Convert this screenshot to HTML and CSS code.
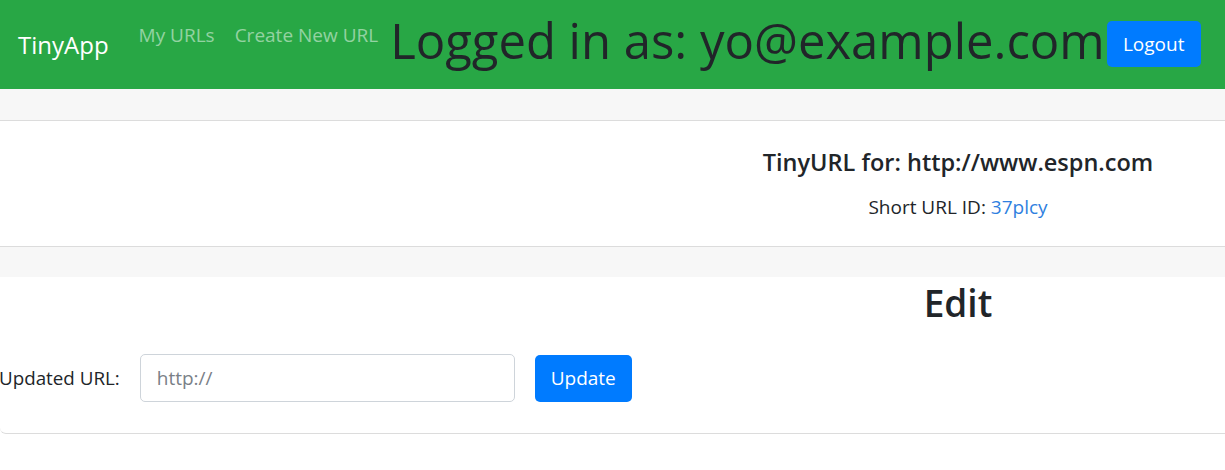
FILE: index.html
```html
<!DOCTYPE html>
<html>
<head>
<meta charset="utf-8">
<link rel="stylesheet" href="styles.css">
<title>TinyApp</title>
</head>
<body>
<nav class="navbar">
  <a class="brand" href="#">TinyApp</a>
  <ul class="nav">
    <li><a class="nav-link" href="#">My URLs</a></li>
    <li><a class="nav-link" href="#">Create New URL</a></li>
  </ul>
  <h1 class="user">Logged in as: yo@example.com</h1>
  <button class="btn logout">Logout</button>
</nav>
<main class="card">
  <div class="card-header"></div>
  <div class="card-body info">
    <h5 class="title">TinyURL for: http://www.espn.com</h5>
    <p class="short">Short URL ID: <a href="#">37plcy</a></p>
  </div>
  <div class="card-header second"></div>
  <div class="card-body edit">
    <h2 class="edit-title">Edit</h2>
    <form class="form">
      <label class="label">Updated URL:</label>
      <input class="input" type="text" placeholder="http://">
      <button class="btn update" type="button">Update</button>
    </form>
  </div>
</main>
</body>
</html>
```
FILE: styles.css
```css
html, body {
  margin: 0;
  padding: 0;
  overflow: hidden;
  background: #fff;
}
body {
  font-family: "Open Sans", "Noto Sans", sans-serif;
  color: #212529;
  font-size: 20px;
  width: 1225px;
}
.navbar {
  background: #28a745;
  height: 89px;
  box-sizing: border-box;
  display: flex;
  align-items: flex-start;
  padding: 0 24px 0 18px;
}
.navbar > * {
  flex-shrink: 0;
  white-space: nowrap;
}
.brand {
  color: #fff;
  text-decoration: none;
  font-size: 24px;
  margin-top: 28px;
  margin-right: 20px;
  line-height: 34px;
}
.nav {
  list-style: none;
  margin: 0;
  padding: 0;
  display: flex;
  margin-top: 20px;
}
.nav-link {
  display: block;
  color: rgba(255, 255, 255, 0.5);
  text-decoration: none;
  font-size: 19px;
  line-height: 30px;
  padding: 0 10px;
  white-space: nowrap;
}
.user {
  margin: 7px 0 0 2px;
  font-size: 49px;
  font-weight: 400;
  line-height: 66px;
  color: #212529;
  white-space: nowrap;
}
.btn {
  font-family: inherit;
  border: none;
  border-radius: 5px;
  background: #007bff;
  color: #fff;
  font-size: 19px;
  cursor: pointer;
}
.logout {
  margin: 21px 0 0 2px;
  width: 94px;
  height: 46px;
}
.card {
  width: 1916px;
  display: flex;
  flex-direction: column;
}
.card-header {
  height: 31px;
  background: #f7f7f7;
  border-bottom: 1px solid #dcdcdc;
}
.card-header.second {
  border-bottom: none;
  height: 30px;
}
.card-body {
  text-align: center;
}
.info {
  height: 126px;
  box-sizing: border-box;
  border-bottom: 1px solid #dcdcdc;
  padding-top: 26px;
}
.title {
  margin: 0;
  font-size: 23.5px;
  font-weight: 600;
  line-height: 30px;
}
.short {
  margin: 16px 0 0;
  font-size: 19px;
  line-height: 28px;
}
.short a {
  color: #2f7fe0;
  text-decoration: none;
}
.edit {
  height: 157px;
  box-sizing: border-box;
  border-bottom: 1px solid #dcdcdc;
  border-bottom-left-radius: 6px;
  padding-top: 2px;
}
.edit-title {
  margin: 0;
  font-size: 37px;
  font-weight: 600;
  line-height: 48px;
}
.form {
  display: flex;
  align-items: center;
  margin-top: 27px;
  text-align: left;
}
.label {
  font-size: 18.8px;
  margin-right: 20px;
  margin-left: -1px;
}
.input {
  width: 375px;
  height: 48px;
  box-sizing: border-box;
  border: 1px solid #ced4da;
  border-radius: 5px;
  padding: 0 16px;
  font-family: inherit;
  font-size: 19px;
  color: #495057;
  outline: none;
}
.input::placeholder {
  color: #7a8087;
}
.update {
  margin-left: 20px;
  width: 97px;
  height: 47px;
}
```
